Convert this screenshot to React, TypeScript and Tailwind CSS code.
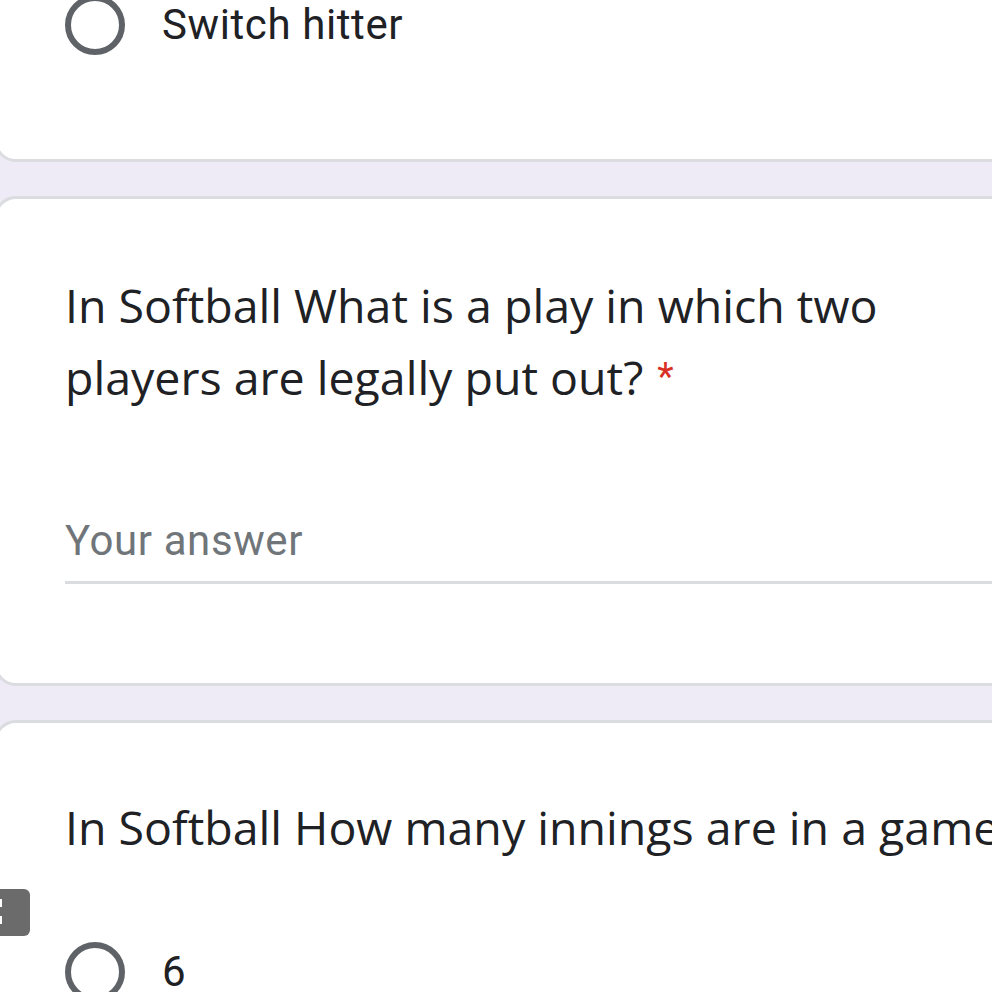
import React from 'react';

const qFont = { fontFamily: '"Open Sans", "Liberation Sans", sans-serif' };

const Radio = () => (
  <span className="block w-[60px] h-[60px] shrink-0 rounded-full border-[6px] border-[#5f6368]" />
);

const Option = ({ label }: { label: string }) => (
  <div className="flex items-center gap-[37px] pl-[68px]">
    <Radio />
    <span className="text-[42px] leading-[60px] tracking-[0.6px] text-[#202124] font-['Roboto',sans-serif]">
      {label}
    </span>
  </div>
);

const Required = () => (
  <span className="ml-[14px] text-[#d93025] text-[38px] align-top font-['Roboto',sans-serif]">*</span>
);

export default function App() {
  return (
    <div className="w-[992px] h-[992px] overflow-hidden bg-[#eeebf6]">
      <div className="flex flex-col gap-[34px] -mt-[40px] -ml-[6px] w-[1120px]">
        {/* previous question, tail end */}
        <div className="rounded-[22px] border-[3px] border-[#dadce0] bg-white pt-[32px] pb-[104px]">
          <Option label="Switch hitter" />
        </div>

        {/* short answer question */}
        <div className="rounded-[22px] border-[3px] border-[#dadce0] bg-white pt-[70px] pb-[99px] pl-[68px]">
          <h2 style={qFont} className="text-[46.5px] leading-[72px] text-[#202124] w-[960px]">
            In Softball What is a play in which two players are legally put out?<Required />
          </h2>
          <div className="mt-[103px] w-[1040px] border-b-[3px] border-[#dadce0] pb-[15px]">
            <span className="text-[42px] leading-[50px] tracking-[0.6px] text-[#70757a] font-['Roboto',sans-serif]">
              Your answer
            </span>
          </div>
        </div>

        {/* multiple choice question */}
        <div className="relative rounded-[22px] border-[3px] border-[#dadce0] bg-white pt-[68px] pb-[80px]">
          <h2 style={qFont} className="pl-[68px] text-[46.5px] leading-[72px] text-[#202124] whitespace-nowrap">
            In Softball How many innings are in a game?<Required />
          </h2>
          <div className="mt-[79px]">
            <Option label="6" />
          </div>
          <div className="absolute left-[-7px] top-[166px] w-[40px] h-[47px] rounded-[6px] bg-[#6b6b6b]">
            <span className="absolute left-[7px] top-[10px] w-[5px] h-[8px] bg-white" />
            <span className="absolute left-[7px] top-[27px] w-[5px] h-[8px] bg-white" />
          </div>
        </div>
      </div>
    </div>
  );
}
